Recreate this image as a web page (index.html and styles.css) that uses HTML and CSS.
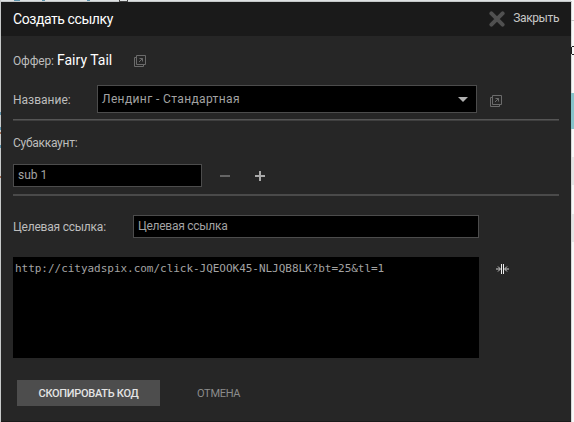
FILE: index.html
```html
<!DOCTYPE html>
<html lang="ru">
<head>
<meta charset="utf-8">
<title>Создать ссылку</title>
<link rel="stylesheet" href="styles.css">
</head>
<body>
<svg class="backdrop" width="574" height="422" viewBox="0 0 574 422" shape-rendering="crispEdges" aria-hidden="true">
  <path fill="#dfe2e3" d="M0 0h571v1H0z"/><path fill="#c4c7c8" d="M0 1h572v1H0z"/>
  <path fill="#c8caca" d="M0 0h1v422H0z"/>
  <path fill="#5d93ac" d="M14 0h6v1h-6zM42 0h3v1h-3zM87 0h3v1h-3zM0 112h1v3H0zM0 127h1v3H0zM0 145h1v3H0z"/>
  <path fill="#a0694f" d="M0 132h1v2H0zM0 176h1v2H0z"/>
  <path fill="#444" d="M119 0h1v2h-1zM127 0h1v2h-1zM119 1h9v1h-9z"/>
  <path fill="#d8d8d8" d="M571 2h1v420h-1z"/><path fill="#f8f8f8" d="M572 0h2v422h-2z"/>
  <path fill="#c5c5c5" d="M571 20h3v1h-3z"/>
  <path fill="#86c3ca" d="M571 93h3v36h-3z"/>
  <path fill="#e5e5e5" d="M572 157h2v28h-2zM572 214h2v28h-2z"/>
  <path fill="#222" d="M571 47h1v7h-1zM572 46h2v1h-2zM572 54h2v1h-2z"/>
</svg>
<main class="dialog">
  <header class="header">
    <h1 class="title">Создать ссылку</h1>
    <button class="close">
      <svg width="16" height="16" viewBox="0 0 16 16"><path d="M2.4 2.4 13.6 13.6M13.6 2.4 2.4 13.6" stroke="#505050" stroke-width="4" stroke-linecap="round"/></svg>
      <span class="close-text">Закрыть</span>
    </button>
  </header>
  <section class="content">
    <div class="row offer">
      <span class="label offer-label">Оффер:</span>
      <span class="offer-name">Fairy Tail</span>
      <svg class="popout" width="12" height="12" viewBox="0 0 12 12"><path d="M2.5.5h9v9h-9zM2 2.5H.5v9h9V10M5 7l3.5-3.5M5.5 3.5h3v3" fill="none" stroke="#6b6b6b"/></svg>
    </div>
    <div class="row name">
      <span class="label name-label">Название:</span>
      <div class="field select"><span class="select-text">Лендинг - Стандартная</span>
        <svg width="10" height="5" viewBox="0 0 10 5"><path d="M0 0h10L5 5z" fill="#b0b0b0"/></svg>
      </div>
      <svg class="popout lower" width="12" height="12" viewBox="0 0 12 12"><path d="M2.5.5h9v9h-9zM2 2.5H.5v9h9V10M5 7l3.5-3.5M5.5 3.5h3v3" fill="none" stroke="#6b6b6b"/></svg>
    </div>
    <hr class="divider">
    <div class="label sub-label"><span class="sub-text">Субаккаунт:</span></div>
    <div class="row sub">
      <div class="field sub-field">sub 1</div>
      <svg class="minus" width="10" height="10" viewBox="0 0 10 10"><path d="M0 4h10v2H0z" fill="#656565"/></svg>
      <svg class="plus" width="10" height="10" viewBox="0 0 10 10"><path d="M0 4h4V0h2v4h4v2H6v4H4V6H0z" fill="#aaa"/></svg>
    </div>
    <hr class="divider second">
    <div class="row target">
      <span class="label target-label">Целевая ссылка:</span>
      <div class="field target-field"><span class="target-text">Целевая ссылка</span></div>
    </div>
    <div class="row result">
      <div class="url">http://cityadspix.com/click-JQEOOK45-NLJQB8LK?bt=25&amp;tl=1</div>
      <svg class="collapse" width="13" height="10" viewBox="0 0 13 10" fill="none"><path d="M5.5 0v10M7.5 0v10" stroke="#eee"/><path d="M0 5h4M9 5h4" stroke="#999" stroke-width="1.3"/><path d="M2 2.5 4.5 5 2 7.5M11 2.5 8.5 5l2.5 2.5" stroke="#ccc"/></svg>
    </div>
    <div class="actions">
      <button class="copy"><span class="copy-text">СКОПИРОВАТЬ КОД</span></button>
      <button class="cancel">ОТМЕНА</button>
    </div>
  </section>
</main>
</body>
</html>
```
FILE: styles.css
```css
* { box-sizing: border-box; }
body { margin: 0; width: 574px; height: 422px; overflow: hidden; background: #fff; font-family: Roboto, "Noto Sans", sans-serif; font-size: 12px; }
svg { display: block; flex: none; }
button { border: 0; padding: 0; margin: 0; background: none; font: inherit; }
span { white-space: nowrap; }
.backdrop { position: absolute; top: 0; left: 0; }
.dialog { position: relative; width: 570px; height: 420px; margin: 2px 0 0 1px; background: #262626; border-bottom: 1px solid #1b1b1b; }
.header { height: 34px; background: #1a1a1a; display: flex; align-items: center; justify-content: space-between; padding: 0 12px; }
.title { margin: 0; padding-bottom: 1px; font-size: 14px; font-weight: 400; color: #fff; letter-spacing: -0.42px; }
.close { display: flex; align-items: center; gap: 8px; color: #c8c8c8; letter-spacing: -0.4px; }
.close-text { padding-bottom: 2px; }
.content { padding: 0 12px; }
.row { display: flex; align-items: center; }
.label { color: #bdbdbd; }
.offer { height: 49px; }
.offer-label { width: 44px; letter-spacing: -0.15px; }
.offer-name { width: 77px; padding-bottom: 2px; font-size: 14px; color: #fff; }
.name { height: 28px; }
.name-label { width: 84px; padding-top: 2px; }
.field { background: #000; border: 1px solid #4c4c4c; color: #a3a3a3; display: flex; align-items: center; padding: 0 4px; }
.select { width: 380px; height: 28px; justify-content: space-between; padding-right: 8px; margin-right: 13px; }
.select-text { letter-spacing: 0.38px; }
.lower { margin-top: 4px; }
.divider { border: 0; height: 2px; margin: 6px 0 0; background: #555; border-bottom: 1px solid #3f3f3f; width: 546px; }
.sub-label { height: 43px; padding-top: 1px; display: flex; align-items: center; }
.sub-text { letter-spacing: -0.28px; }
.sub { height: 23px; }
.sub-field { width: 189px; height: 23px; padding-bottom: 2px; }
.minus { margin-left: 18px; }
.plus { margin-left: 25px; }
.second { margin-top: 7px; background: #4a4a4a; border-bottom-color: #4a4a4a; }
.target { height: 23px; margin-top: 19px; }
.target-label { width: 120px; letter-spacing: -0.22px; }
.target-field { width: 346px; height: 23px; padding-bottom: 2px; }
.target-text { letter-spacing: -0.27px; }
.result { margin-top: 19px; align-items: flex-start; }
.url { width: 466px; height: 101px; background: #000; color: #a3a3a3; font: 11px/13px "DejaVu Sans Mono", monospace; padding: 5px 2px; letter-spacing: -0.03px; }
.collapse { margin: 7px 0 0 17px; }
.actions { display: flex; align-items: center; margin: 22px 0 0 4px; }
.copy { width: 143px; height: 26px; background: #4d4d4d; color: #e4e4e4; font-size: 11px; font-weight: 500; letter-spacing: -0.3px; }
.cancel { margin-left: 37px; color: #8c8c8c; font-size: 11px; letter-spacing: -0.3px; }
```
